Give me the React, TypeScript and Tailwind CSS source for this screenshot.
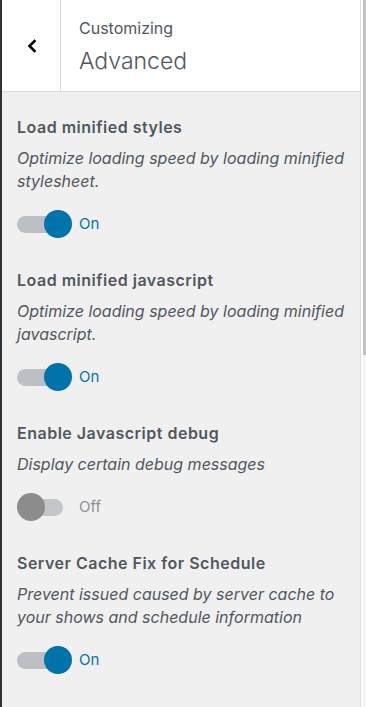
import React from "react";

function Toggle({ on }: { on: boolean }) {
  return (
    <div className="flex items-center">
      <div className="relative w-[55px] h-[28px]">
        {on ? (
          <>
            <div className="absolute left-0 top-[6px] w-[46px] h-[17px] rounded-full bg-[#bcc0c4]" />
            <div className="absolute right-0 top-0 w-[28px] h-[28px] rounded-full bg-[#0073aa]" />
          </>
        ) : (
          <>
            <div className="absolute left-0 top-[6px] w-[46px] h-[17px] rounded-full bg-[#c3c7cb]" />
            <div className="absolute left-0 top-0 w-[28px] h-[28px] rounded-full bg-[#8c8c8c]" />
          </>
        )}
      </div>
      <span
        className={
          "ml-[7px] text-[15px] leading-[20px] " +
          (on ? "text-[#0073aa]" : "text-[#8c8f94]")
        }
      >
        {on ? "On" : "Off"}
      </span>
    </div>
  );
}

function Setting({ title, desc, on }: { title: string; desc: string; on: boolean }) {
  return (
    <div className="mb-[32px]">
      <div className="text-[16px] leading-[20px] font-semibold tracking-[0.5px] text-[#50575e]">{title}</div>
      <div className="mt-[10px] text-[16px] leading-[23px] italic text-[#50575e]">{desc}</div>
      <div className="mt-[17px]">
        <Toggle on={on} />
      </div>
    </div>
  );
}

export default function App() {
  return (
    <div
      className="w-[366px] h-[707px] flex overflow-hidden bg-white"
      style={{ fontFamily: 'Inter, "Noto Sans", sans-serif' }}
    >
      <div className="w-[2px] bg-[#2c3338]" />
      <div className="w-[359px] flex flex-col bg-[#f0f0f1] border-r border-[#dcdcde]">
        <div className="h-[92px] flex bg-white border-b border-[#dcdcde]">
          <div className="w-[59px] border-r border-[#dcdcde] flex items-center justify-center">
            <svg width="14" height="14" viewBox="0 0 14 14" className="ml-[2px]">
              <path d="M9.5 2 L4.5 7 L9.5 12" fill="none" stroke="#000" strokeWidth="2.6" strokeLinecap="square" />
            </svg>
          </div>
          <div className="pl-[18px] pt-[18px]">
            <div className="text-[16px] leading-[20px] text-[#50575e]">Customizing</div>
            <div className="mt-[8px] text-[23px] leading-[30px] font-light text-[#50575e]">Advanced</div>
          </div>
        </div>
        <div className="pl-[15px] pr-[8px] pt-[25px]">
          <Setting
            title="Load minified styles"
            desc="Optimize loading speed by loading minified stylesheet."
            on
          />
          <Setting
            title="Load minified javascript"
            desc="Optimize loading speed by loading minified javascript."
            on
          />
          <Setting
            title="Enable Javascript debug"
            desc="Display certain debug messages"
            on={false}
          />
          <Setting
            title="Server Cache Fix for Schedule"
            desc="Prevent issued caused by server cache to your shows and schedule information"
            on
          />
        </div>
      </div>
      <div className="flex-1 flex bg-white">
        <div className="w-[2px]" />
        <div className="w-[3px] flex flex-col">
          <div className="h-[355px] bg-[#c1c1c1]" />
          <div className="flex-1 bg-[#f5f5f5]" />
        </div>
      </div>
    </div>
  );
}
